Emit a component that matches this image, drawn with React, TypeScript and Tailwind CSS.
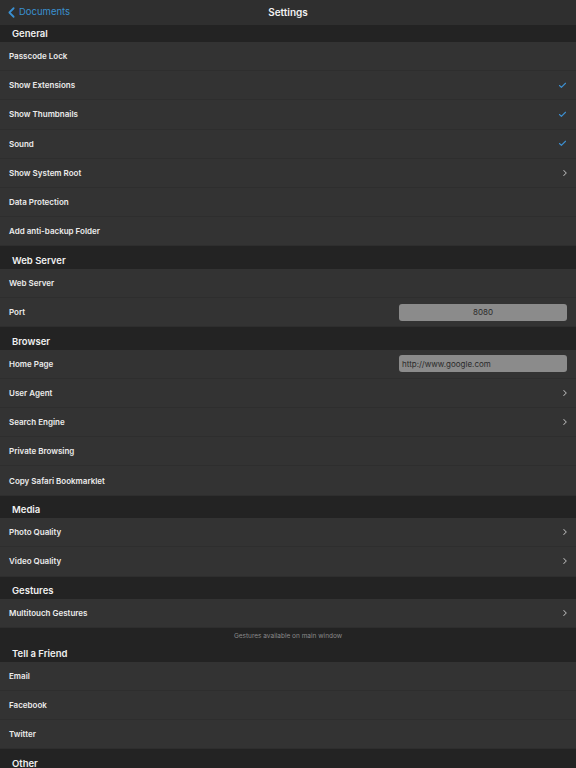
import { ChevronLeft, ChevronRight, Check } from "lucide-react";

type Accessory = "check" | "chevron" | "none";

type Row = {
  label: string;
  accessory?: Accessory;
  field?: { value: string; align: "center" | "left" };
};

type Section = {
  title: string;
  rows: Row[];
  footer?: string;
  compact?: boolean;
};

const sections: Section[] = [
  {
    title: "General",
    compact: true,
    rows: [
      { label: "Passcode Lock" },
      { label: "Show Extensions", accessory: "check" },
      { label: "Show Thumbnails", accessory: "check" },
      { label: "Sound", accessory: "check" },
      { label: "Show System Root", accessory: "chevron" },
      { label: "Data Protection" },
      { label: "Add anti-backup Folder" },
    ],
  },
  {
    title: "Web Server",
    rows: [
      { label: "Web Server" },
      { label: "Port", field: { value: "8080", align: "center" } },
    ],
  },
  {
    title: "Browser",
    rows: [
      { label: "Home Page", field: { value: "http://www.google.com", align: "left" } },
      { label: "User Agent", accessory: "chevron" },
      { label: "Search Engine", accessory: "chevron" },
      { label: "Private Browsing" },
      { label: "Copy Safari Bookmarklet" },
    ],
  },
  {
    title: "Media",
    rows: [
      { label: "Photo Quality", accessory: "chevron" },
      { label: "Video Quality", accessory: "chevron" },
    ],
  },
  {
    title: "Gestures",
    rows: [{ label: "Multitouch Gestures", accessory: "chevron" }],
    footer: "Gestures available on main window",
  },
  {
    title: "Tell a Friend",
    rows: [{ label: "Email" }, { label: "Facebook" }, { label: "Twitter" }],
  },
  {
    title: "Other",
    rows: [],
  },
];

const SettingsRow = ({ row }: { row: Row }) => (
  <div className="flex h-[29.2px] items-center justify-between border-b border-[#2e2e2e] bg-[#333333] px-[9px]">
    <span className="text-[8px] font-semibold text-[#ececec]">{row.label}</span>
    {row.field && (
      <div
        className={`flex h-[17px] w-[168px] items-center rounded-[3px] bg-[#8b8b8b] text-[8px] text-[#2a2a2a] ${
          row.field.align === "center" ? "justify-center" : "px-[3px]"
        }`}
      >
        {row.field.value}
      </div>
    )}
    {row.accessory === "check" && (
      <Check className="h-[9px] w-[9px] text-[#3d8fd0]" strokeWidth={3} />
    )}
    {row.accessory === "chevron" && (
      <ChevronRight className="mr-[-3px] h-[10px] w-[10px] text-[#b4b4b4]" strokeWidth={2.5} />
    )}
  </div>
);

export default function App() {
  return (
    <div
      className="h-[768px] w-[576px] overflow-hidden bg-[#232323]"
      style={{ fontFamily: "Inter, 'Liberation Sans', sans-serif" }}
    >
      {/* Navigation bar */}
      <div className="relative flex h-[25px] items-center justify-center bg-[#2f2f2f]">
        <div className="absolute left-[3px] top-0 flex h-full items-center text-[#3a8fd0]">
          <ChevronLeft className="h-[17px] w-[17px]" strokeWidth={2.5} />
          <span className="ml-[-1px] text-[9.5px]">Documents</span>
        </div>
        <span className="text-[10px] font-semibold text-[#f2f2f2]">Settings</span>
      </div>

      {sections.map((section) => (
        <div key={section.title}>
          <div
            className={`flex items-end bg-[#232323] px-[12px] pb-[2px] ${
              section.compact ? "h-[17px]" : "h-[22.5px]"
            }`}
          >
            <span className="text-[9.5px] leading-[12px] font-semibold text-[#f0f0f0]">
              {section.title}
            </span>
          </div>
          {section.rows.map((row) => (
            <SettingsRow key={row.label} row={row} />
          ))}
          {section.footer && (
            <div className="flex h-[11px] items-end justify-center text-[6.5px] leading-[6px] text-[#8a8a8a]">
              {section.footer}
            </div>
          )}
        </div>
      ))}
    </div>
  );
}
